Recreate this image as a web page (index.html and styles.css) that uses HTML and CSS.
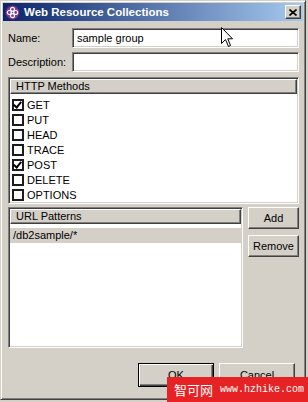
FILE: index.html
```html
<!DOCTYPE html>
<html lang="en">
<head>
  <meta charset="UTF-8" />
  <title>Web Resource Collections</title>
  <link rel="stylesheet" href="styles.css">
</head>
<body>
  <div class="window">
    <div class="titlebar">
      <svg class="app-icon" width="15" height="15" viewBox="0 0 15 15">
        <circle cx="7.5" cy="7.5" r="7" fill="#7a3a9a" stroke="#4a1d66" stroke-width="1"/>
        <circle cx="7.5" cy="4.3" r="2" fill="none" stroke="#fff" stroke-width="1.2"/>
        <circle cx="7.5" cy="10.7" r="2" fill="none" stroke="#fff" stroke-width="1.2"/>
        <circle cx="4.3" cy="7.5" r="2" fill="none" stroke="#fff" stroke-width="1.2"/>
        <circle cx="10.7" cy="7.5" r="2" fill="none" stroke="#fff" stroke-width="1.2"/>
      </svg>
      <span class="title">Web Resource Collections</span>
      <span class="close-btn">
        <svg width="8" height="7" viewBox="0 0 8 7">
          <path d="M0.5 0.5 L7.5 6.5 M7.5 0.5 L0.5 6.5" stroke="#000" stroke-width="1.6"/>
        </svg>
      </span>
    </div>

    <div class="content">
      <div class="field-row">
        <span class="field-label">Name:</span>
        <div class="textbox">sample group</div>
      </div>
      <div class="field-row">
        <span class="field-label">Description:</span>
        <div class="textbox"></div>
      </div>

      <div class="table methods">
        <div class="table-head">HTTP Methods</div>
        <ul class="check-list">
          <li><span class="checkbox checked"></span>GET</li>
          <li><span class="checkbox"></span>PUT</li>
          <li><span class="checkbox"></span>HEAD</li>
          <li><span class="checkbox"></span>TRACE</li>
          <li><span class="checkbox checked"></span>POST</li>
          <li><span class="checkbox"></span>DELETE</li>
          <li><span class="checkbox"></span>OPTIONS</li>
        </ul>
      </div>

      <div class="url-section">
        <div class="table urls">
          <div class="table-head">URL Patterns</div>
          <ul class="url-list">
            <li class="selected">/db2sample/*</li>
          </ul>
        </div>
        <div class="side-buttons">
          <span class="btn">Add</span>
          <span class="btn">Remove</span>
        </div>
      </div>

      <div class="dialog-buttons">
        <span class="btn wide default">OK</span>
        <span class="btn wide">Cancel</span>
      </div>
    </div>
  </div>

  <svg class="cursor" width="13" height="21" viewBox="0 0 13 21">
    <path d="M0.5 0.5 L0.5 16.5 L4.5 12.5 L7.5 19.5 L9.5 18.5 L6.8 11.8 L11.5 11.8 Z" fill="#fff" stroke="#000" stroke-width="1"/>
  </svg>

  <div class="watermark"><span class="wm-cn">智可网</span><span class="wm-url">www.hzhike.com</span></div>
</body>
</html>
```

FILE: styles.css
```css
body {
  margin: 0;
  padding: 0;
  background: #d4d0c8;
  font-family: "Liberation Sans", Arial, sans-serif;
  font-size: 11px;
  color: #000;
  width: 308px;
  height: 402px;
  overflow: hidden;
  position: relative;
}
.window {
  width: 306px;
  height: 400px;
  box-sizing: border-box;
  border: 1px solid;
  border-color: #d4d0c8 #404040 #404040 #d4d0c8;
  box-shadow: inset 1px 1px 0 #fff, inset -1px -1px 0 #808080;
  padding: 2px;
  background: #d4d0c8;
}
.titlebar {
  height: 18px;
  display: flex;
  align-items: center;
  background: linear-gradient(to right, #0a246a, #a6caf0);
  padding: 0 2px 0 2px;
}
.app-icon {
  flex: none;
  margin-right: 4px;
}
.title {
  flex: 1;
  color: #fff;
  font-weight: bold;
  font-size: 11.5px;
  white-space: nowrap;
}
.close-btn {
  width: 16px;
  height: 14px;
  box-sizing: border-box;
  display: flex;
  align-items: center;
  justify-content: center;
  background: #d4d0c8;
  border: 1px solid;
  border-color: #fff #404040 #404040 #fff;
  box-shadow: inset -1px -1px 0 #808080;
}
.content {
  padding: 7px 4px 0 5px;
}
.field-row {
  display: flex;
  align-items: center;
  margin-bottom: 4px;
}
.field-label {
  width: 64px;
  flex: none;
}
.textbox {
  flex: 1;
  height: 20px;
  box-sizing: border-box;
  background: #fff;
  border: 1px solid;
  border-color: #808080 #fff #fff #808080;
  box-shadow: inset 1px 1px 0 #404040, inset -1px -1px 0 #d4d0c8;
  padding: 0 4px;
  line-height: 18px;
}
.table {
  background: #fff;
  border: 1px solid;
  border-color: #808080 #fff #fff #808080;
  box-shadow: inset 1px 1px 0 #404040, inset -1px -1px 0 #d4d0c8;
  padding: 1px;
  box-sizing: border-box;
}
.methods {
  margin-top: 5px;
  height: 127px;
}
.table-head {
  height: 15px;
  box-sizing: border-box;
  background: #d4d0c8;
  border: 1px solid;
  border-color: #fff #404040 #404040 #fff;
  box-shadow: inset -1px -1px 0 #808080;
  padding-left: 5px;
  line-height: 13px;
}
ul {
  list-style: none;
  margin: 0;
  padding: 0;
}
.check-list {
  padding-top: 3px;
}
.check-list li {
  height: 15px;
  display: flex;
  align-items: center;
  padding-left: 2px;
}
.checkbox {
  width: 12px;
  height: 12px;
  box-sizing: border-box;
  border: 2px solid #1c1c1c;
  background: #fff;
  margin-right: 3px;
  position: relative;
}
.checkbox.checked::after {
  content: "";
  position: absolute;
  left: 1px;
  top: -1px;
  width: 3px;
  height: 6px;
  border: solid #000;
  border-width: 0 2px 2px 0;
  transform: rotate(40deg);
}
.url-section {
  display: flex;
  gap: 5px;
  margin-top: 3px;
}
.urls {
  width: 235px;
  height: 141px;
}
.url-list {
  padding-top: 4px;
}
.url-list li {
  height: 15px;
  line-height: 15px;
  padding-left: 3px;
}
.url-list li.selected {
  background: #d4d0c8;
}
.side-buttons {
  display: flex;
  flex-direction: column;
  gap: 6px;
  width: 51px;
}
.btn {
  height: 22px;
  box-sizing: border-box;
  display: flex;
  align-items: center;
  justify-content: center;
  background: #d4d0c8;
  border: 1px solid;
  border-color: #fff #404040 #404040 #fff;
  box-shadow: inset -1px -1px 0 #808080;
}
.dialog-buttons {
  display: flex;
  justify-content: flex-end;
  gap: 5px;
  margin-top: 15px;
  padding-right: 4px;
}
.btn.wide {
  width: 76px;
  height: 24px;
}
.btn.default {
  border: 1px solid #000;
  box-shadow: inset 1px 1px 0 #fff, inset -1px -1px 0 #404040, inset -2px -2px 0 #808080;
}
.cursor {
  position: absolute;
  left: 221px;
  top: 27px;
}
.watermark {
  position: absolute;
  left: 167px;
  top: 377px;
  width: 141px;
  height: 25px;
  background: #e62224;
  color: #fff;
  display: flex;
  align-items: center;
  padding-left: 7px;
  box-sizing: border-box;
}
.wm-cn {
  font-family: "Noto Sans CJK SC", sans-serif;
  font-size: 13px;
  margin-right: 7px;
}
.wm-url {
  font-family: "Liberation Mono", monospace;
  font-size: 10px;
}
```
